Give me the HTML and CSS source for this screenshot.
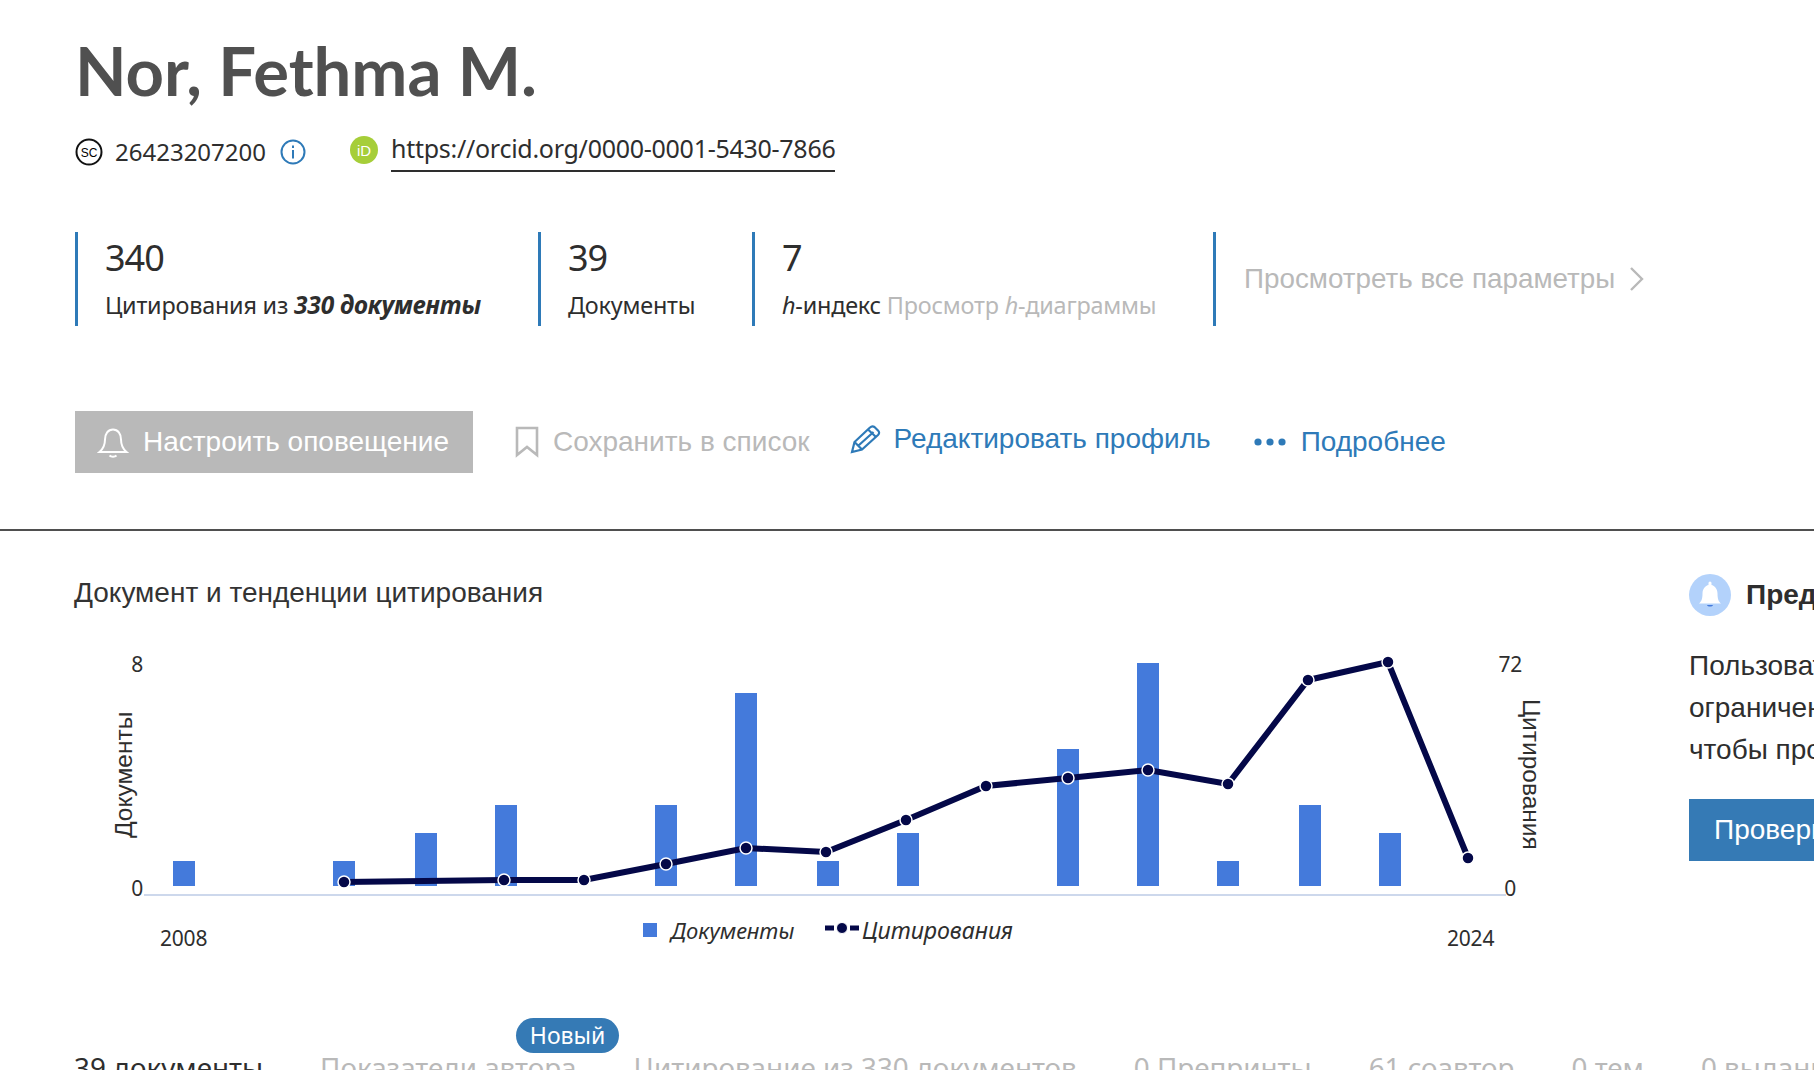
FILE: index.html
```html
<!DOCTYPE html>
<html lang="ru">
<head>
  <meta charset="UTF-8" />
  <title>Nor, Fethma M.</title>
  <link rel="stylesheet" href="styles.css">
</head>
<body>
  <header class="profile">
    <h1 class="name">Nor, Fethma M.</h1>

    <div class="ids">
      <svg class="icon-sc" width="28" height="28" viewBox="0 0 28 28">
        <circle cx="14" cy="14" r="12.5" fill="#fff" stroke="#111" stroke-width="2"/>
        <text x="14" y="18.5" text-anchor="middle" class="sc-text">SC</text>
      </svg>
      <span class="author-id">26423207200</span>
      <svg class="icon-info" width="26" height="26" viewBox="0 0 26 26">
        <circle cx="13" cy="13" r="11.5" fill="none" stroke="#2e7ab8" stroke-width="2"/>
        <rect x="12" y="11" width="2" height="8.5" fill="#2e7ab8"/>
        <rect x="12" y="6.5" width="2" height="2.5" fill="#2e7ab8"/>
      </svg>
      <svg class="icon-orcid" width="28" height="28" viewBox="0 0 28 28">
        <circle cx="14" cy="14" r="14" fill="#a6ce39"/>
        <text x="14" y="19.5" text-anchor="middle" class="orcid-text">iD</text>
      </svg>
      <a class="orcid-link">https://orcid.org/0000-0001-5430-7866</a>
    </div>

    <div class="stats">
      <div class="stat">
        <div class="stat-num">340</div>
        <div class="stat-label">Цитирования из <b><i>330 документы</i></b></div>
      </div>
      <div class="stat">
        <div class="stat-num">39</div>
        <div class="stat-label">Документы</div>
      </div>
      <div class="stat">
        <div class="stat-num">7</div>
        <div class="stat-label"><i>h</i>-индекс <span class="muted">Просмотр <i>h</i>-диаграммы</span></div>
      </div>
      <div class="stat stat-all">
        <span class="all-metrics">Просмотреть все параметры</span>
        <svg width="16" height="26" viewBox="0 0 16 26"><path d="M2 2l11 11L2 24" fill="none" stroke="#b9b9b9" stroke-width="2.4"/></svg>
      </div>
    </div>

    <div class="actions">
      <button class="alert-btn">
        <svg width="32" height="32" viewBox="0 0 32 32" fill="none" stroke="#fff" stroke-width="2">
          <path d="M2.500 26c3.500-3 5.500-6 5.500-12.500C8 8 11 3.500 16 3.500S24 8 24 13.500C24 20 26 23 29.500 26z"/>
          <path d="M12.500 29.500c1.500 1.500 5.500 1.500 7 0"/>
        </svg>
        Настроить оповещение
      </button>
      <span class="action action-off">
        <svg width="24" height="32" viewBox="0 0 24 32"><path d="M2 2h20v27l-10-8-10 8z" fill="none" stroke="#b9b9b9" stroke-width="2.6"/></svg>
        Сохранить в список
      </span>
      <a class="action action-edit">
        <svg width="32" height="30" viewBox="0 0 32 30" fill="none" stroke="#2e7ab8" stroke-width="2.2">
          <path d="M2 28l2.500-10L20 3.500c1.500-1.500 3-1.500 4.500-.5l3.500 3.500c1.500 1.500 1.500 3 0 4.500L12 25.500z"/>
          <path d="M18 5.500l8 7.500M4.500 18l7.500 7.500M8.500 21.500L23.500 8"/>
        </svg>
        Редактировать профиль
      </a>
      <a class="action action-more">
        <svg width="32" height="8" viewBox="0 0 32 8" fill="#2e7ab8"><circle cx="4" cy="4" r="3.6"/><circle cx="16" cy="4" r="3.6"/><circle cx="28" cy="4" r="3.6"/></svg>
        Подробнее
      </a>
    </div>
  </header>

  <hr class="rule">

  <section class="trends">
    <div class="chart-block">
      <h2 class="chart-title">Документ и тенденции цитирования</h2>
      <svg class="chart" width="1600" height="340" viewBox="0 617 1600 340">
        <g fill="#447adb">
          <rect x="173" y="861" width="22" height="25"/>
          <rect x="333" y="861" width="22" height="25"/>
          <rect x="415" y="833" width="22" height="53"/>
          <rect x="495" y="805" width="22" height="81"/>
          <rect x="655" y="805" width="22" height="81"/>
          <rect x="735" y="693" width="22" height="193"/>
          <rect x="817" y="861" width="22" height="25"/>
          <rect x="897" y="833" width="22" height="53"/>
          <rect x="1057" y="749" width="22" height="137"/>
          <rect x="1137" y="663" width="22" height="223"/>
          <rect x="1217" y="861" width="22" height="25"/>
          <rect x="1299" y="805" width="22" height="81"/>
          <rect x="1379" y="833" width="22" height="53"/>
        </g>
        <line x1="144" y1="895" x2="1506" y2="895" stroke="#cdd8ec" stroke-width="2"/>
        <polyline fill="none" stroke="#040848" stroke-width="6" points="344,882 504,880 584,880 666,864 746,848 826,852 906,820 986,786 1068,778 1148,770 1228,784 1308,680 1388,662 1468,858"/>
        <g fill="#040848" stroke="#fff" stroke-width="1.5">
          <circle cx="344" cy="882" r="6"/>
          <circle cx="504" cy="880" r="6"/>
          <circle cx="584" cy="880" r="6"/>
          <circle cx="666" cy="864" r="6"/>
          <circle cx="746" cy="848" r="6"/>
          <circle cx="826" cy="852" r="6"/>
          <circle cx="906" cy="820" r="6"/>
          <circle cx="986" cy="786" r="6"/>
          <circle cx="1068" cy="778" r="6"/>
          <circle cx="1148" cy="770" r="6"/>
          <circle cx="1228" cy="784" r="6"/>
          <circle cx="1308" cy="680" r="6"/>
          <circle cx="1388" cy="662" r="6"/>
          <circle cx="1468" cy="858" r="6"/>
        </g>
        <text class="tick" x="143" y="672" text-anchor="end">8</text>
        <text class="tick" x="143" y="896" text-anchor="end">0</text>
        <text class="tick" x="1522" y="672" text-anchor="end">72</text>
        <text class="tick" x="1516" y="896" text-anchor="end">0</text>
        <text class="tick" x="160" y="946">2008</text>
        <text class="tick" x="1447" y="946">2024</text>
        <text class="axis-name" transform="translate(132 838) rotate(-90)">Документы</text>
        <text class="axis-name" transform="translate(1523 699) rotate(90)">Цитирования</text>
        <rect x="643" y="923" width="14" height="14" fill="#447adb"/>
        <text class="legend" x="671" y="939">Документы</text>
        <line x1="825" y1="928" x2="859" y2="928" stroke="#040848" stroke-width="5" stroke-dasharray="9 3 10 3 9"/>
        <circle cx="842" cy="928" r="5.5" fill="#040848" stroke="#fff" stroke-width="1"/>
        <text class="legend legend-cite" x="862" y="939">Цитирования</text>
      </svg>
    </div>

    <aside class="notice">
      <div class="notice-head">
        <svg width="42" height="42" viewBox="0 0 42 42">
          <circle cx="21" cy="21" r="21" fill="#b3d2fb"/>
          <path d="M10 29.500c2.500-2 3.500-4.500 3.500-10 0-4.500 3-8 6-8.500v-2a1.500 1.500 0 0 1 3 0v2c3 .5 6 4 6 8.500 0 5.500 1 8 3.500 10z" fill="#fff"/>
          <path d="M18 31h6c-.5 2-5.500 2-6 0z" fill="#447adb"/>
        </svg>
        <b>Предупреждение</b>
      </div>
      <p class="notice-text">Пользовательский доступ<br>ограниченным данным,<br>чтобы просмотреть профиль</p>
      <div class="notice-btn">Проверить</div>
    </aside>
  </section>

  <nav class="tabs">
    <span class="tab tab-on">39 документы</span>
    <span class="tab tab-new">Показатели автора<span class="badge">Новый</span></span>
    <span class="tab">Цитирование из 330 документов</span>
    <span class="tab">0 Препринты</span>
    <span class="tab">61 соавтор</span>
    <span class="tab">0 тем</span>
    <span class="tab">0 выданных грантов</span>
  </nav>
</body>
</html>
```

FILE: styles.css
```css
html, body { margin: 0; height: 100%; overflow: hidden; background: #fff; }
body { width: 1814px; font-family: "Noto Sans", sans-serif; color: #2e2e2e; }

.profile { padding-left: 75px; }
.name { margin: 0; height: 111px; padding-top: 29px; box-sizing: border-box; font: 700 67px/82px Lato, "Noto Sans", sans-serif; color: #505050; }

.ids { display: flex; align-items: center; height: 44px; font-size: 24px; margin-top: 19px; }
.icon-sc { margin-right: 12px; }
.icon-info { margin-left: 13px; }
.icon-orcid { margin-left: 44px; margin-right: 13px; margin-bottom: 4px; }
.author-id { width: 152px; margin-bottom: 2px; }
.orcid-link { font-size: 25px; letter-spacing: -.27px; border-bottom: 2px solid #2e2e2e; padding-bottom: 5px; margin-bottom: 2px; }
.sc-text { font: 12px "Liberation Sans", sans-serif; }
.orcid-text { font: 15px "Liberation Sans", sans-serif; fill: #fff; }

.stats { display: grid; grid-template-columns: 463px 214px 461px auto; margin-top: 58px; }
.stat { border-left: 3px solid #2e7ab8; height: 94px; padding-left: 27px; box-sizing: border-box; }
.stat-num { font-size: 36px; line-height: 48px; padding-top: 2px; letter-spacing: -1px; }
.stat-label { font-size: 23.4px; line-height: 32px; margin-top: 7px; letter-spacing: -.2px; white-space: nowrap; }
.stat-label b { font-size: 24.5px; }
.muted { color: #b9b9b9; }
.stat-all { display: flex; align-items: center; gap: 14px; padding-left: 28px; }
.all-metrics { font: 27.8px "Liberation Sans", sans-serif; color: #b9b9b9; }

.actions { display: flex; align-items: center; margin-top: 85px; height: 62px; font: 28px "Liberation Sans", sans-serif; }
.alert-btn { display: flex; align-items: center; gap: 14px; width: 398px; height: 62px; padding: 0 0 0 22px; border: 0; background: #b9b9b9; color: #fff; font: inherit; }
.action { display: flex; align-items: center; gap: 15px; }
.action-off { margin-left: 42px; gap: 14px; color: #b9b9b9; }
.action-edit { margin-left: 40px; margin-bottom: 6px; gap: 12px; color: #2e7ab8; }
.action-more { margin-left: 43px; color: #2e7ab8; }

.rule { border: 0; border-top: 2px solid #4f4f4f; margin: 56px 0 0; }

.trends { display: flex; padding-left: 74px; }
.chart-block { width: 1615px; flex: none; }
.chart-title { margin: 44px 0 0; font: 400 28px/36px "Liberation Sans", sans-serif; color: #333; }
.chart { display: block; margin-left: -74px; margin-top: 6px; }
.tick { font: 21px "Noto Sans", sans-serif; fill: #2e2e2e; letter-spacing: -.2px; }
.axis-name { font: 24.5px "Liberation Sans", sans-serif; fill: #2e2e2e; }
.legend { font: italic 22px "Noto Sans", sans-serif; fill: #2e2e2e; letter-spacing: -.1px; }
.legend-cite { font-size: 23.2px; }

.notice { flex: none; width: 500px; margin-top: 43px; font: 28px/42px "Liberation Sans", sans-serif; }
.notice-head { display: flex; align-items: center; gap: 15px; height: 42px; white-space: nowrap; }
.notice-text { margin: 29px 0 0; white-space: nowrap; }
.notice-btn { margin-top: 28px; height: 62px; line-height: 62px; padding-left: 25px; background: #357ab5; color: #fff; }

.tabs { display: flex; gap: 57px; padding-left: 74px; margin-top: 92px; font-size: 27.8px; line-height: 36px; color: #b9b9b9; white-space: nowrap; }
.tab-on { color: #2e2e2e; }
.tab-new { position: relative; }
.badge { position: absolute; left: 196px; top: -31px; width: 103px; height: 35px; border-radius: 18px; background: #357ab5; color: #fff; font: 23px/35px "Noto Sans", sans-serif; text-align: center; }
```
